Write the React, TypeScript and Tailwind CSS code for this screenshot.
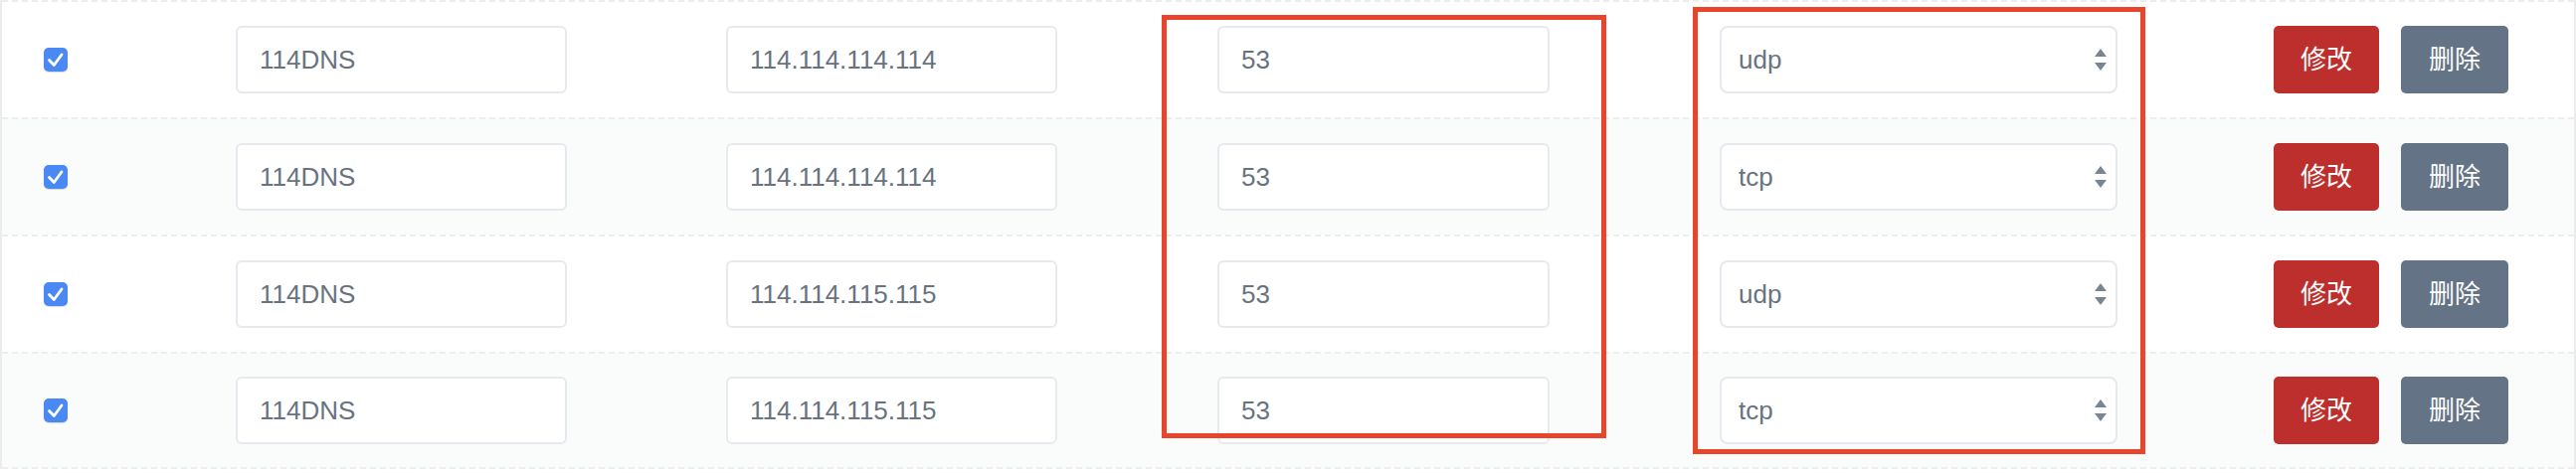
import { FC } from "react";

type DnsRow = {
  name: string;
  ip: string;
  port: string;
  proto: string;
};

const rows: DnsRow[] = [
  { name: "114DNS", ip: "114.114.114.114", port: "53", proto: "udp" },
  { name: "114DNS", ip: "114.114.114.114", port: "53", proto: "tcp" },
  { name: "114DNS", ip: "114.114.115.115", port: "53", proto: "udp" },
  { name: "114DNS", ip: "114.114.115.115", port: "53", proto: "tcp" },
];

const fieldCls =
  "h-[68px] rounded-[6px] border-2 border-[#e6e9ed] bg-white pl-[22px] text-[26px] text-[#68737f] outline-none";

const CheckBox: FC = () => (
  <div className="flex h-6 w-6 items-center justify-center rounded-[5px] bg-[#4a89f3] shadow-[0_1px_1px_rgba(0,0,0,0.15)]">
    <svg width="24" height="24" viewBox="0 0 24 24" fill="none">
      <path
        d="M5.5 12.5l4.8 5L18 7"
        stroke="white"
        strokeWidth="2.8"
        strokeLinecap="round"
        strokeLinejoin="round"
      />
    </svg>
  </div>
);

const SelectBox: FC<{ value: string }> = ({ value }) => (
  <div className="relative flex h-[68px] w-[400px] items-center rounded-[8px] border-2 border-[#e6e9ed] bg-white pl-[17px] text-[26px] text-[#68737f]">
    {value}
    <svg
      className="absolute right-[9px] top-[21px]"
      width="12"
      height="23"
      viewBox="0 0 12 23"
    >
      <path d="M6 0L12 8H0Z" fill="#7a8592" />
      <path d="M0 14H12L6 22Z" fill="#7a8592" />
    </svg>
  </div>
);

const App: FC = () => {
  return (
    <div
      className="relative h-[476px] w-[2590px] overflow-hidden bg-white"
      style={{ fontFamily: '"Liberation Sans", Arial, "Noto Sans CJK SC", sans-serif' }}
    >
      <div className="border-x-2 border-[#ececec]">
        {rows.map((r, i) => (
          <div
            key={i}
            className={
              "grid h-[118px] grid-cols-[235px_493px_494px_505px_557px_1fr] items-center border-t-2 border-dashed border-[#ededed] " +
              (i % 2 === 1 ? "bg-[#fafbfb]" : "bg-white") +
              (i === rows.length - 1 ? " border-b-2" : "")
            }
          >
            <div className="pl-[42px]">
              <CheckBox />
            </div>
            <div>
              <input readOnly value={r.name} className={fieldCls + " w-[333px]"} />
            </div>
            <div>
              <input readOnly value={r.ip} className={fieldCls + " w-[333px]"} />
            </div>
            <div>
              <input readOnly value={r.port} className={fieldCls + " w-[334px]"} />
            </div>
            <div>
              <SelectBox value={r.proto} />
            </div>
            <div className="flex gap-[22px]">
              <button className="h-[68px] w-[106px] rounded-[5px] bg-[#bd2f2c] text-[26px] text-white">
                修改
              </button>
              <button className="h-[68px] w-[108px] rounded-[5px] bg-[#647385] text-[26px] text-white">
                删除
              </button>
            </div>
          </div>
        ))}
      </div>

      {/* annotation boxes */}
      <div className="pointer-events-none absolute left-[1168px] top-[15px] h-[426px] w-[447px] border-[5px] border-[#e9452c]" />
      <div className="pointer-events-none absolute left-[1702px] top-[7px] h-[450px] w-[455px] border-[5px] border-[#e9452c]" />
    </div>
  );
};

export default App;
